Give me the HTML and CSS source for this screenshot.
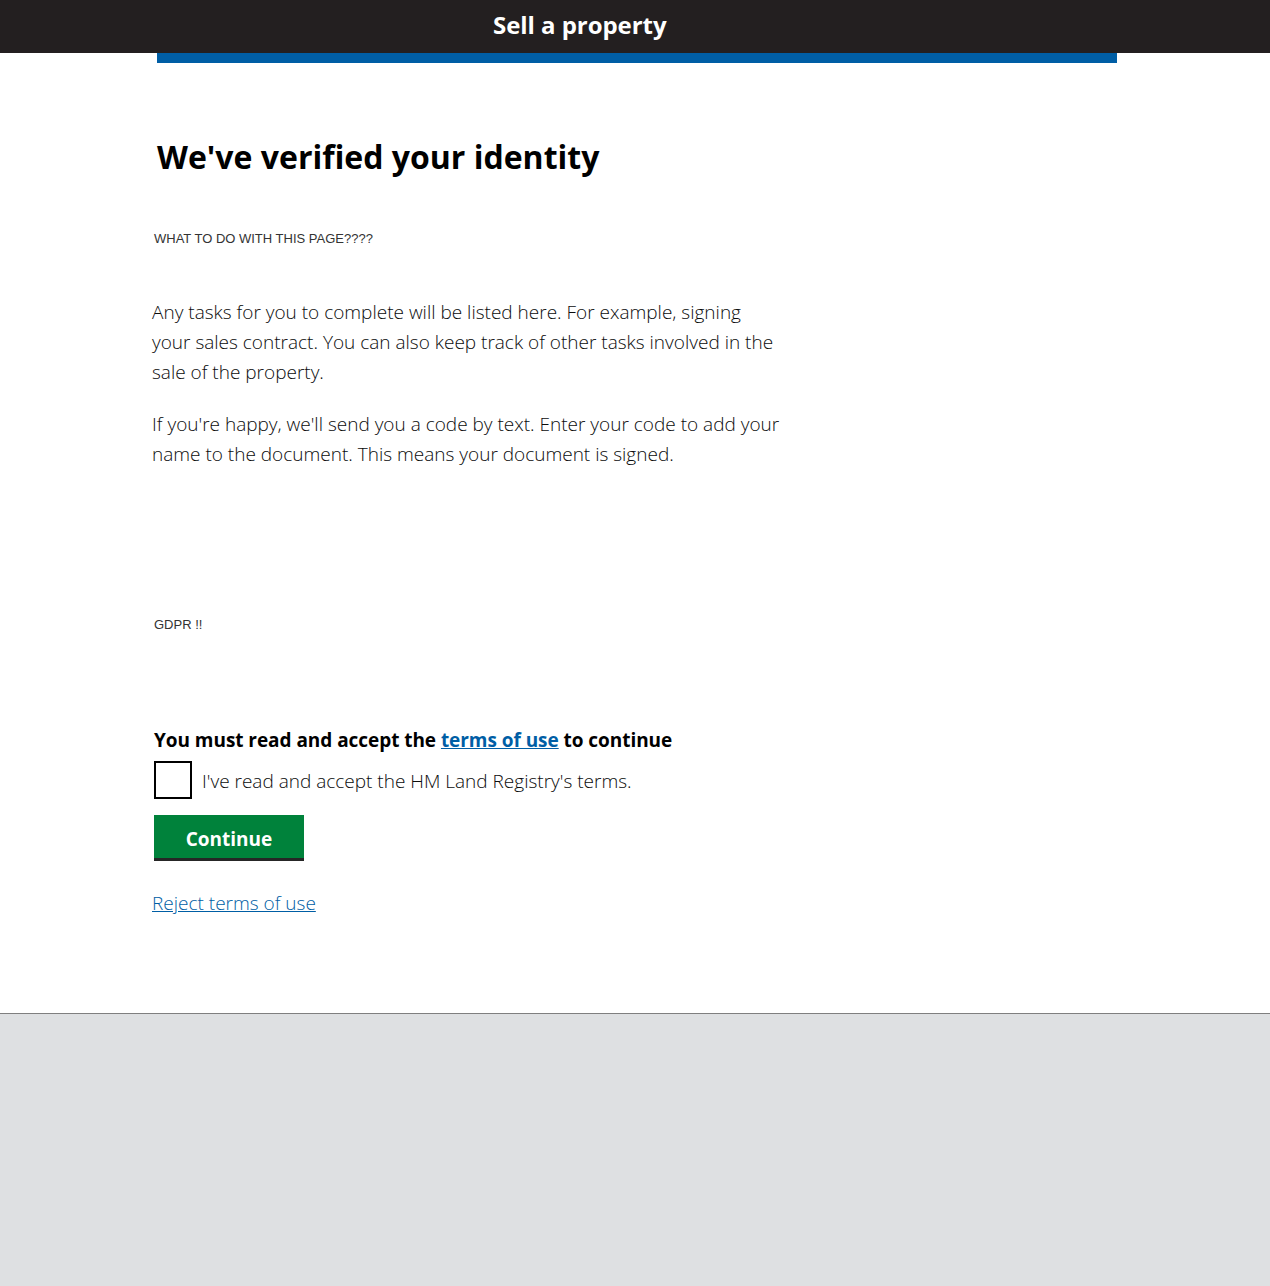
FILE: index.html
```html
<!DOCTYPE html>
<html lang="en">
<head>
<meta charset="utf-8">
<title>Sell a property</title>
<link rel="stylesheet" href="styles.css">
</head>
<body>
<header class="site-header">
  <div class="site-title">Sell a property</div>
</header>
<div class="wrap">
  <div class="phase-bar"></div>
  <main class="content">
    <h1 class="page-heading">We've verified your identity</h1>
    <p class="note note-top">WHAT TO DO WITH THIS PAGE????</p>
    <p class="body-text para-1">Any tasks for you to complete will be listed here. For example, signing your sales contract. You can also keep track of other tasks involved in the sale of the property.</p>
    <p class="body-text para-2">If you're happy, we'll send you a code by text. Enter your code to add your name to the document. This means your document is signed.</p>
    <p class="note note-gdpr">GDPR !!</p>
    <form class="terms-form">
      <p class="terms-label">You must read and accept the <a href="#" class="terms-link">terms of use</a> to continue</p>
      <label class="check-row">
        <span class="check-box"></span>
        <span class="check-text">I've read and accept the HM Land Registry's terms.</span>
      </label>
      <button type="button" class="btn-continue">Continue</button>
      <a href="#" class="reject-link">Reject terms of use</a>
    </form>
  </main>
</div>
<footer class="site-footer"></footer>
</body>
</html>
```

FILE: styles.css
```css
html, body {
  margin: 0;
  padding: 0;
}
body {
  min-height: 100vh;
  display: flex;
  flex-direction: column;
  background: #ffffff;
  font-family: "Open Sans", "Liberation Sans", sans-serif;
  color: #0b0c0c;
}
.site-header {
  background: #231f20;
  height: 53px;
  display: flex;
  align-items: center;
}
.site-title {
  margin-left: 493px;
  color: #ffffff;
  font-weight: 700;
  font-size: 24px;
  line-height: 30px;
  margin-top: -4px;
  letter-spacing: -0.05px;
}
.wrap {
  width: 964px;
  margin: 0 auto;
  padding-left: 4px;
  box-sizing: border-box;
}
.phase-bar {
  height: 10px;
  background: #005ea5;
}
.content {
  margin-left: -5px;
  padding-bottom: 95px;
}
.page-heading {
  margin: 74px 0 0 5px;
  font-size: 32px;
  line-height: 40px;
  font-weight: 700;
  color: #000000;
}
.note {
  font-family: "Liberation Sans", Arial, sans-serif;
  font-size: 13px;
  line-height: 16px;
  padding-top: 1px;
  color: #333333;
  margin: 0 0 0 2px;
}
.note-top {
  margin-top: 53px;
}
.body-text {
  font-weight: 300;
  font-size: 19px;
  line-height: 30px;
  color: #0b0c0c;
  max-width: 628px;
  margin: 0;
}
.para-1 {
  margin-top: 50px;
}
.para-2 {
  margin-top: 22px;
}
.note-gdpr {
  margin-top: 147px;
}
.terms-form {
  margin: 92px 0 0 2px;
  display: flex;
  flex-direction: column;
  align-items: flex-start;
}
.terms-label {
  margin: 0;
  font-weight: 700;
  font-size: 19px;
  line-height: 30px;
  color: #000000;
  letter-spacing: -0.05px;
}
.terms-link {
  color: #005ea5;
  text-decoration: underline;
}
.check-row {
  margin-top: 6px;
  display: flex;
  align-items: center;
  gap: 10px;
}
.check-box {
  width: 38px;
  height: 38px;
  box-sizing: border-box;
  border: 2px solid #000000;
  background: #ffffff;
}
.check-text {
  font-weight: 300;
  font-size: 19px;
  line-height: 30px;
  padding-top: 2px;
  color: #0b0c0c;
}
.btn-continue {
  margin-top: 16px;
  width: 150px;
  height: 43px;
  border: 0;
  background: #00823b;
  box-shadow: 0 3px 0 #262626;
  color: #ffffff;
  font-family: "Open Sans", "Liberation Sans", sans-serif;
  font-weight: 700;
  font-size: 19px;
  line-height: 24px;
  padding: 4px 0 0;
  cursor: pointer;
}
.reject-link {
  margin: 30px 0 0 -2px;
  font-weight: 300;
  font-size: 19px;
  line-height: 30px;
  color: #005ea5;
  text-decoration: underline;
}
.site-footer {
  flex: 1;
  background: #dee0e2;
  border-top: 1px solid #7f7f7f;
}
```
